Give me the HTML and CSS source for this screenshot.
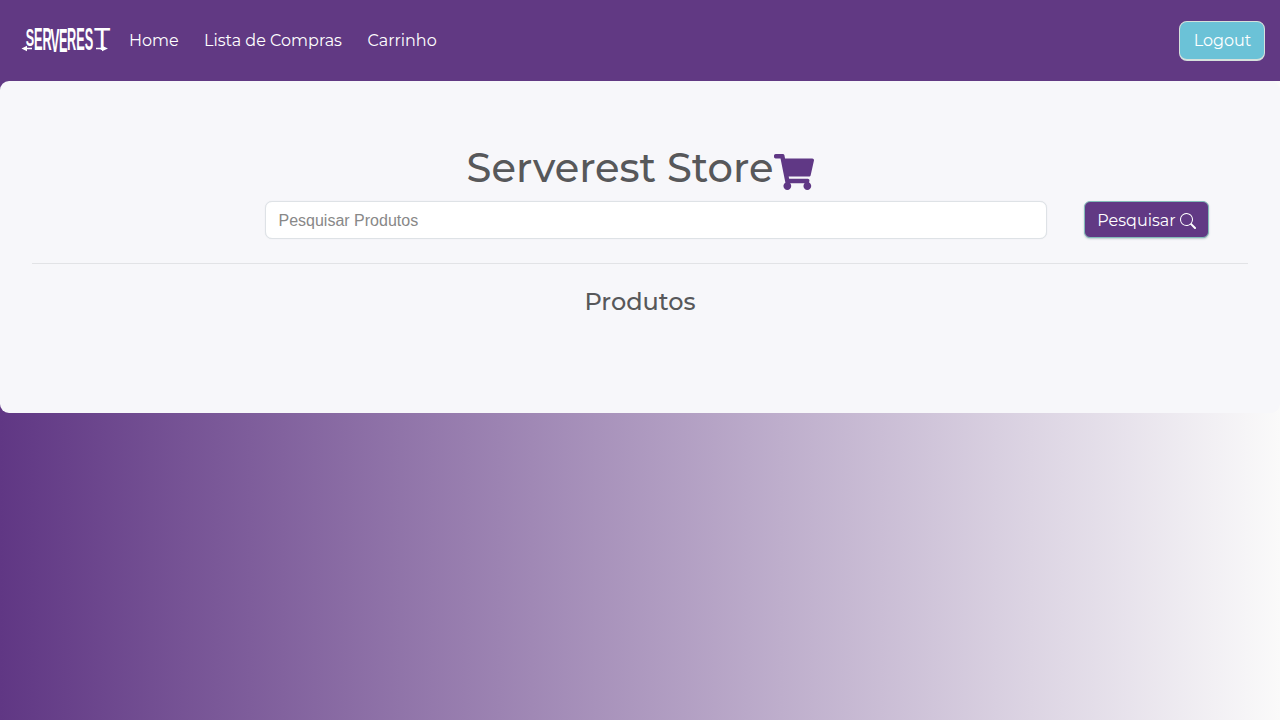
FILE: index.html
```html
<!DOCTYPE html>
<html lang="pt-BR">
<head>
<meta charset="utf-8">
<title>Serverest Store</title>
<link rel="stylesheet" href="styles.css">
</head>
<body>
<nav class="navbar">
  <svg class="logo" width="92" height="36" viewBox="0 0 92 36" role="img" aria-label="Serverest">
    <g class="logo-text">
      <text transform="translate(4.800 23.500) scale(.6 1.100)" font-size="21">S</text>
      <text transform="translate(13 27.500) scale(.530 1.270)" font-size="24">ER</text>
      <text transform="translate(29.500 29.500) scale(.560 1.390)" font-size="24">V</text>
      <text transform="translate(38 29.500) scale(.530 1.390)" font-size="24">E</text>
      <text transform="translate(46 27.500) scale(.530 1.270)" font-size="24">RES</text>
      <text transform="translate(72.800 27.500) scale(1.150 1.270)" font-size="24" class="logo-t">T</text>
    </g>
    <path d="M.5 26.500 6 23.800v2h5v1.500H6v2zM87 26.500 81 23.800v2h-6v1.500h6v2z" fill="#fff"/>
  </svg>
  <a class="link home">Home</a>
  <a class="link lista">Lista de Compras</a>
  <a class="link carrinho">Carrinho</a>
  <button class="btn logout">Logout</button>
</nav>
<main class="jumbotron">
  <h1 class="title"><span>Serverest Store</span><svg class="cart" width="40" height="36" viewBox="0 0 576 512" preserveAspectRatio="none"><path fill="#603885" d="M528.12 301.319l47.273-208C578.806 78.301 567.391 64 551.99 64H159.208l-9.166-44.810C147.758 8.021 137.930 0 126.529 0H24C10.745 0 0 10.745 0 24v16c0 13.255 10.745 24 24 24h69.883l70.248 343.435C147.325 417.100 136 435.222 136 456c0 30.928 25.072 56 56 56s56-25.072 56-56c0-15.674-6.447-29.835-16.824-40h209.647C430.447 426.165 424 440.326 424 456c0 30.928 25.072 56 56 56s56-25.072 56-56c0-22.172-12.888-41.332-31.579-50.405l5.517-24.276c3.413-15.018-8.002-29.319-23.403-29.319H218.117l-6.545-32h293.145c11.206 0 20.920-7.754 23.403-18.681z"/></svg></h1>
  <div class="search">
    <input class="field" type="text" placeholder="Pesquisar Produtos">
    <button class="btn submit"><span>Pesquisar</span><svg width="16" height="16" viewBox="0 0 16 16" fill="#fff"><path d="M11.742 10.344a6.500 6.500 0 1 0-1.397 1.398h-.001c.03.04.062.078.098.115l3.850 3.850a1 1 0 0 0 1.415-1.414l-3.850-3.850a1.007 1.007 0 0 0-.115-.1zM12 6.500a5.500 5.500 0 1 1-11 0 5.500 5.500 0 0 1 11 0z"/></svg></button>
  </div>
  <hr class="divider">
  <h4 class="subtitle">Produtos</h4>
</main>
</body>
</html>
```
FILE: styles.css
```css
* { box-sizing: border-box; }
html { min-height: 100%; }
body {
  margin: 0;
  min-height: 720px;
  font: 16px/24px Montserrat, Inter, sans-serif;
  background: linear-gradient(to right, #603784, #fafafa);
}
.navbar {
  display: flex;
  align-items: center;
  height: 81px;
  padding: 0 15px 0 21px;
  background: #613983;
}
.logo { flex: none; margin-right: 16px; margin-top: -1px; }
.logo-text { font-family: "Liberation Sans", sans-serif; font-weight: 700; fill: #fff; }
.logo-t { font-weight: 400; }
.link { color: #fff; white-space: nowrap; }
.home { width: 75px; }
.lista { width: 163.500px; }
.btn {
  display: flex;
  align-items: center;
  justify-content: center;
  padding: 1px 0 0;
  font: inherit;
  color: #fff;
  white-space: nowrap;
}
.logout {
  margin-left: auto;
  width: 86px;
  height: 40px;
  padding-left: 1px;
  background: #6bc2d7;
  border: 1px solid #d6e1dc;
  border-bottom-width: 2px;
  border-radius: 8px;
}
.jumbotron {
  height: 332px;
  padding: 64px 32px;
  background: #f7f7fa;
  border-radius: 9px;
}
.title {
  display: flex;
  justify-content: center;
  height: 48px;
  margin: 0 0 8px;
  font-size: 40px;
  line-height: 46px;
  font-weight: 500;
  color: #57585a;
}
.cart { flex: none; margin: 9px -1px 0 1px; }
.search { display: flex; justify-content: space-between; padding: 0 39px 0 233px; }
.field {
  width: 782px;
  height: 38px;
  padding: 2px 13px 0 12.500px;
  font: 16px "Liberation Sans", Arial, sans-serif;
  background: #fff;
  border: 1px solid #dee2e6;
  border-radius: 7px;
  box-shadow: 0 0 1px #dce0e5;
}
.field::placeholder { color: #888; opacity: 1; }
.submit {
  width: 125px;
  height: 37px;
  gap: 4px;
  padding-top: 2px;
  background: #613984;
  border: 1px solid #83bcb9;
  border-radius: 6px;
  box-shadow: 0 1px 2px #b9c9cc;
}
.submit svg { margin-top: 1px; }
.divider { margin: 24px 0 23px; border: 0; border-top: 1px solid #e2e3e6; }
.subtitle {
  margin: 0;
  font-size: 24px;
  line-height: 29px;
  font-weight: 500;
  text-align: center;
  color: #57585a;
}
```
